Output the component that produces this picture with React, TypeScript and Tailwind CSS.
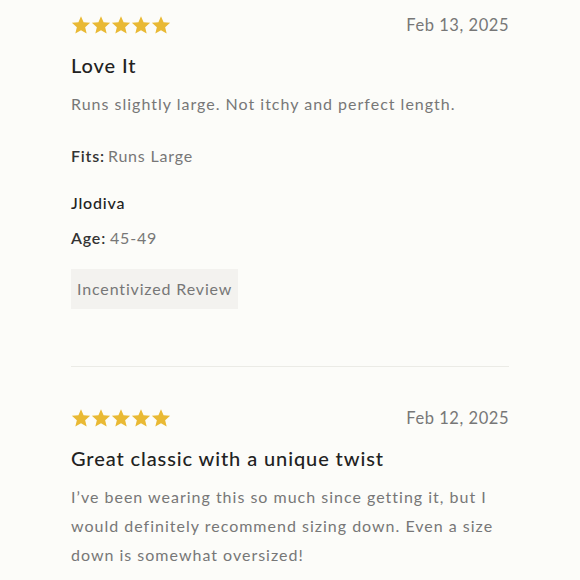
import React from "react";

function Star() {
  return (
    <svg width="20" height="20" viewBox="0 0 24 24" className="block">
      <path
        d="M12 1.5l3.09 7.26 7.86.68-5.96 5.17 1.79 7.69L12 18.2l-6.78 4.1 1.79-7.69L1.05 9.44l7.86-.68z"
        fill="#e9b934"
      />
    </svg>
  );
}

function Stars() {
  return (
    <div className="flex h-[20px] items-center">
      {[0, 1, 2, 3, 4].map((i) => (
        <Star key={i} />
      ))}
    </div>
  );
}

export default function App() {
  return (
    <div
      className="min-h-[580px] w-[580px] overflow-hidden bg-[#fcfcf9]"
      style={{ fontFamily: "Lato, 'Open Sans', sans-serif" }}
    >
      <div className="ml-[71px] w-[438px] pt-[15px]">
        {/* Review 1 */}
        <div className="flex items-center justify-between">
          <Stars />
          <span className="text-[16.5px] leading-[20px] tracking-[0.55px] text-[#777]">Feb 13, 2025</span>
        </div>
        <div className="mt-[16px] text-[20px] leading-[28px] font-medium tracking-[0.9px] text-[#222]">Love It</div>
        <p className="mt-[10px] text-[16px] leading-[29px] tracking-[1px] text-[#777]">
          Runs slightly large. Not itchy and perfect length.
        </p>
        <div className="mt-[26px] text-[16px] leading-[24px] tracking-[0.8px]">
          <span className="font-semibold text-[#333]">Fits:</span>
          <span className="ml-[3px] text-[#777]">Runs Large</span>
        </div>
        <div className="mt-[23px] text-[16px] leading-[24px] font-medium tracking-[0.8px] text-[#222]">Jlodiva</div>
        <div className="mt-[11px] text-[16px] leading-[24px] tracking-[0.8px]">
          <span className="font-semibold text-[#333]">Age:</span>
          <span className="ml-[4px] text-[#777]">45-49</span>
        </div>
        <div className="mt-[19px] inline-flex h-[40px] items-center bg-[#f3f2ef] px-[6px] text-[16px] tracking-[0.85px] text-[#777]">
          Incentivized Review
        </div>
        <div className="mt-[57px] h-px w-full bg-[#ebebe6]" />

        {/* Review 2 */}
        <div className="mt-[41px] flex items-center justify-between">
          <Stars />
          <span className="text-[16.5px] leading-[20px] tracking-[0.55px] text-[#777]">Feb 12, 2025</span>
        </div>
        <div className="mt-[16px] text-[20px] leading-[28px] font-medium tracking-[0.9px] text-[#222]">
          Great classic with a unique twist
        </div>
        <p className="mt-[10px] text-[16px] leading-[29px] tracking-[1px] text-[#777]">
          I’ve been wearing this so much since getting it, but I would definitely recommend sizing down. Even a size
          down is somewhat oversized!
        </p>
      </div>
    </div>
  );
}
